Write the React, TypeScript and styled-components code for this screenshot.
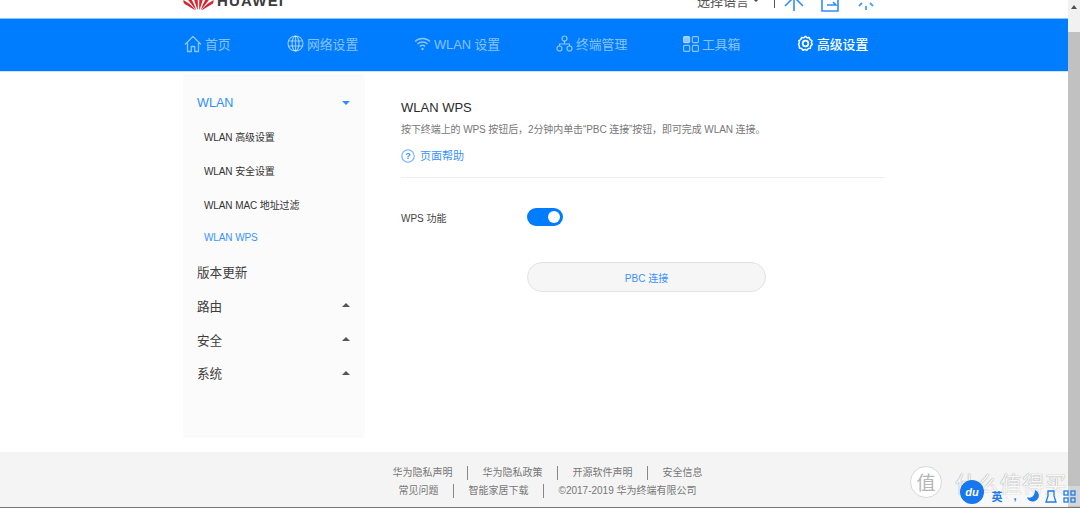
import React from 'react';
import styled, { createGlobalStyle } from 'styled-components';

const GlobalStyle = createGlobalStyle`
  html, body {
    margin: 0;
    padding: 0;
    height: 100%;
    overflow: hidden;
    background: #fff;
    font-family: "Liberation Sans", "Noto Sans CJK SC", sans-serif;
  }
`;

const Screen = styled.div`
  position: relative;
  width: 1080px;
  height: 508px;
  display: flex;
  overflow: hidden;
  border-bottom: 1px solid #777;
  box-sizing: border-box;
`;

const Page = styled.div`
  width: 1068px;
  display: flex;
  flex-direction: column;
`;

const TopBar = styled.header`
  height: 18px;
  flex: none;
  overflow: hidden;
  display: flex;
  align-items: flex-end;
  padding: 0 192px 0 183px;
  justify-content: space-between;
`;

const Logo = styled.div`
  display: flex;
  align-items: center;
  gap: 3px;
  height: 24px;
  margin-bottom: 6px;
  color: #3c3c3c;
  font-size: 15px;
  font-weight: 700;
  letter-spacing: 1.2px;
`;

const TopTools = styled.div`
  display: flex;
  align-items: center;
  height: 24px;
  margin-bottom: 6px;
  color: #555;
  font-size: 13px;
`;

const LangCaret = styled.span`
  width: 0;
  height: 0;
  margin: 0 15px 0 4px;
  border: 3px solid transparent;
  border-top: 3px solid #444;
  border-bottom: 0;
`;

const ToolDivider = styled.span`
  width: 1px;
  height: 16px;
  background: #555;
  margin-right: 9px;
`;

const ToolIcon = styled.svg`
  width: 20px;
  height: 24px;
  margin-right: 16px;
  &:last-child { margin-right: 0; }
`;

const Nav = styled.nav`
  height: 54px;
  flex: none;
  box-sizing: border-box;
  background: #007dff;
  border-top: 1px solid #8cc4ff;
  border-bottom: 1px solid #cfe5ff;
  display: flex;
  align-items: center;
  padding: 0 0 3px 184px;
`;

const NavItem = styled.div<{ $active?: boolean; $width: number }>`
  width: ${(p) => p.$width}px;
  flex: none;
  display: flex;
  align-items: center;
  gap: 3px;
  color: ${(p) => (p.$active ? '#fff' : 'rgba(255,255,255,0.55)')};
  font-size: 12.8px;
  font-weight: ${(p) => (p.$active ? 500 : 400)};
  white-space: nowrap;
  svg { flex: none; }
`;

const Body = styled.main`
  flex: 1;
  display: flex;
  padding: 2px 0 14px 183px;
  min-height: 0;
`;

const Sidebar = styled.aside`
  width: 182px;
  flex: none;
  box-sizing: border-box;
  background: #fbfbfb;
  padding-top: 12px;
`;

const MenuRow = styled.div<{ $active?: boolean }>`
  height: 33.75px;
  display: flex;
  align-items: center;
  justify-content: space-between;
  padding: 0 15px 0 14px;
  color: ${(p) => (p.$active ? '#2f8dff' : '#3d3d3d')};
  font-size: 12.6px;
`;

const SubRow = styled.div<{ $active?: boolean }>`
  height: 33.75px;
  display: flex;
  align-items: center;
  padding-left: 21px;
  color: ${(p) => (p.$active ? '#3a92ff' : '#333')};
  font-size: 10px;
  letter-spacing: -0.1px;
`;

const Caret = styled.span<{ $open?: boolean }>`
  width: 0;
  height: 0;
  border-left: 4.5px solid transparent;
  border-right: 4.5px solid transparent;
  ${(p) => (p.$open ? 'border-top: 4.5px solid #2f8dff;' : 'border-bottom: 4.5px solid #555;')}
`;

const Content = styled.section`
  width: 484px;
  flex: none;
  margin-left: 36px;
  padding-top: 24px;
`;

const Title = styled.h1`
  margin: 0;
  font-size: 13px;
  line-height: 20px;
  font-weight: 400;
  color: #2a2a2a;
`;

const Hint = styled.p`
  margin: 5px 0 0;
  font-size: 10px;
  letter-spacing: -0.09px;
  line-height: 14px;
  color: #777;
  white-space: nowrap;
`;

const HelpLink = styled.div`
  display: flex;
  align-items: center;
  gap: 5px;
  margin-top: 12px;
  padding-bottom: 14px;
  border-bottom: 1px solid #eee;
  color: #3a92ff;
  font-size: 11px;
  line-height: 14px;
`;

const FieldRow = styled.div`
  display: flex;
  align-items: center;
  margin-top: 29px;
  height: 20px;
`;

const FieldLabel = styled.label`
  width: 126px;
  flex: none;
  font-size: 10px;
  color: #444;
`;

const Toggle = styled.span`
  width: 36px;
  height: 18px;
  box-sizing: border-box;
  padding: 2px;
  border-radius: 9px;
  background: #007dff;
  display: flex;
  justify-content: flex-end;
  &::after {
    content: '';
    width: 12px;
    height: 12px;
    margin: 1px 1px 0 0;
    border-radius: 50%;
    background: #fff;
  }
`;

const PbcButton = styled.button`
  display: block;
  width: 239px;
  height: 30px;
  margin: 35px 0 0 126px;
  padding: 0;
  background: #f6f6f6;
  border: 1px solid #e2e2e2;
  border-radius: 16px;
  color: #3a92ff;
  font-family: inherit;
  font-size: 10px;
`;

const Footer = styled.footer`
  height: 55px;
  flex: none;
  box-sizing: border-box;
  background: #f4f4f4;
  padding: 12px 0 0 27px;
  display: flex;
  flex-direction: column;
  align-items: center;
`;

const FooterLine = styled.div`
  display: flex;
  align-items: center;
  height: 18px;
  font-size: 10px;
  color: #777;
`;

const FooterLink = styled.span`
  padding: 0 14.5px;
  &:first-child { padding-left: 0; }
  &:last-child { padding-right: 0; }
  & + & { border-left: 1px solid #888; }
  line-height: 14px;
`;

const Scrollbar = styled.div`
  width: 12px;
  flex: none;
  background: #f1f1f1;
  display: flex;
  flex-direction: column;
  align-items: center;
  padding-top: 5px;
  box-sizing: border-box;
  margin-left: auto;
`;

const ScrollArrow = styled.span`
  flex: none;
  width: 0;
  height: 0;
  border-left: 3.5px solid transparent;
  border-right: 3.5px solid transparent;
  border-bottom: 4px solid #505050;
`;

const ScrollThumb = styled.div`
  width: 100%;
  flex: 1;
  margin-top: 23px;
  background: #c1c1c1;
`;

const Watermark = styled.div`
  position: absolute;
  right: 13px;
  bottom: 9px;
  display: flex;
  align-items: center;
  gap: 13px;
  color: rgba(255, 255, 255, 0.95);
  font-size: 22px;
  line-height: 32px;
  letter-spacing: 0.4px;
  font-family: "Noto Sans CJK SC", sans-serif;
  text-shadow: 0 0 1px rgba(0, 0, 0, 0.55);
  white-space: nowrap;
`;

const WatermarkBadge = styled.span`
  width: 32px;
  height: 32px;
  box-sizing: border-box;
  border-radius: 50%;
  background: #fff;
  border: 1px solid #d8d8d8;
  display: flex;
  align-items: center;
  justify-content: center;
  color: #b5b5b5;
  font-size: 19px;
  letter-spacing: 0;
  text-shadow: none;
`;

const ImeBar = styled.div`
  position: absolute;
  right: 0;
  bottom: 1px;
  width: 120px;
  height: 20px;
  display: flex;
  align-items: center;
  padding-left: 28px;
  box-sizing: border-box;
  background: rgba(255, 255, 255, 0.35);
  color: #1f7be8;
  font-size: 11px;
  font-weight: 700;
`;

const ImeItem = styled.span`
  width: 18px;
  flex: none;
  display: flex;
  justify-content: center;
`;

const ImeBadge = styled.span`
  position: absolute;
  left: 0;
  bottom: 2px;
  width: 24px;
  height: 24px;
  border-radius: 50%;
  background: #1677ee;
  color: #fff;
  font-size: 11px;
  font-weight: 700;
  font-style: italic;
  display: flex;
  align-items: center;
  justify-content: center;
`;

const HomeIcon = () => (
  <svg width="18" height="18" viewBox="0 0 18 18" fill="none" stroke="currentColor" strokeWidth="1.3">
    <path d="M1 9.500 9 1.500l8 8M3.500 8v8.500h3.800v-5h3.400v5h3.800V8" strokeLinejoin="round" />
  </svg>
);

const GlobeIcon = () => (
  <svg width="17" height="17" viewBox="0 0 17 17" fill="none" stroke="currentColor" strokeWidth="1.2">
    <circle cx="8.500" cy="8.500" r="7.500" />
    <ellipse cx="8.500" cy="8.500" rx="3.400" ry="7.500" />
    <path d="M1.500 6h14M1.500 11h14M8.500 1v15" />
  </svg>
);

const WifiIcon = () => (
  <svg width="17" height="17" viewBox="0 0 17 17" fill="none" stroke="currentColor" strokeWidth="1.3">
    <path d="M1 6.500c4-4 11-4 15 0M3.400 9c2.800-2.700 7.400-2.700 10.200 0M5.800 11.400c1.500-1.300 3.900-1.300 5.400 0" />
    <circle cx="8.500" cy="14" r="1.200" fill="currentColor" stroke="none" />
  </svg>
);

const TreeIcon = () => (
  <svg width="17" height="17" viewBox="0 0 17 17" fill="none" stroke="currentColor" strokeWidth="1.200">
    <circle cx="8.500" cy="3.500" r="2.500" />
    <circle cx="3.500" cy="13.500" r="2.500" />
    <circle cx="13.500" cy="13.500" r="2.500" />
    <path d="M8.500 6v3M3.500 11V9h10v2" />
  </svg>
);

const ToolsIcon = () => (
  <svg width="16" height="16" viewBox="0 0 16 16" fill="none" stroke="currentColor" strokeWidth="1.2">
    <rect x="0.600" y="0.600" width="6" height="6" rx="1" fill="currentColor" />
    <rect x="9.400" y="0.600" width="6" height="6" rx="1" />
    <rect x="0.600" y="9.400" width="6" height="6" rx="1" />
    <rect x="9.400" y="9.400" width="6" height="6" rx="1" />
  </svg>
);

const GearIcon = () => (
  <svg width="17" height="17" viewBox="0 0 17 17" fill="none" stroke="currentColor">
    <path d="M8.500 1.200 10 2.800l2.200-.3.800 2.100 2 1-.6 2.100.9 1.800-1.700 1.500-.2 2.200-2.200.4-1.300 1.800-1.900-1-2 .9-1.300-1.800-2.200-.4-.2-2.200L1.500 9.500l.9-1.900-.6-2 2-1 .8-2.100 2.200.3z" strokeWidth="1.500" strokeLinejoin="round" />
    <circle cx="8.500" cy="8.500" r="2.800" strokeWidth="1.800" />
  </svg>
);

const HelpIcon = () => (
  <svg width="14" height="14" viewBox="0 0 14 14">
    <circle cx="7" cy="7" r="6.200" fill="none" stroke="#6aaeff" strokeWidth="1.100" />
    <text x="7" y="10" textAnchor="middle" fontSize="9" fontWeight="700" fill="#3a92ff" fontFamily="Liberation Sans">?</text>
  </svg>
);

const HuaweiMark = () => (
  <svg width="31" height="24" viewBox="0 0 33 24" fill="#d9232e">
    <path d="M15.500 23 11 9c-.4-2 .5-4 2.500-5.500 2 3 2.800 12 2 19.500zM17.500 23 22 9c.4-2-.5-4-2.500-5.500-2 3-2.800 12-2 19.500z" />
    <path d="M14 23 5.500 12c-1-1.800-.6-3.600.5-5 2.500 3 6.500 10 8 16zM19 23l8.500-11c1-1.800.6-3.600-.5-5-2.500 3-6.500 10-8 16z" />
    <path d="M13 23 1.500 16c-1-1-1.200-2.500-1-4 3 2 10 6 12.500 11zM20 23l11.500-7c1-1 1.200-2.500 1-4-3 2-10 6-12.500 11z" />
  </svg>
);

const navItems = [
  { label: '首页', width: 103, icon: <HomeIcon /> },
  { label: '网络设置', width: 127, icon: <GlobeIcon /> },
  { label: 'WLAN 设置', width: 142, icon: <WifiIcon /> },
  { label: '终端管理', width: 127, icon: <TreeIcon /> },
  { label: '工具箱', width: 114, icon: <ToolsIcon /> },
  { label: '高级设置', width: 100, icon: <GearIcon />, active: true },
];

const App = () => (
  <Screen>
    <GlobalStyle />
    <Page>
      <TopBar>
        <Logo>
          <HuaweiMark />
          <span>HUAWEI</span>
        </Logo>
        <TopTools>
          <span>选择语言</span>
          <LangCaret />
          <ToolDivider />
          <ToolIcon viewBox="0 0 20 24" fill="none" stroke="#2f8dff" strokeWidth="1.600">
            <path d="M10 12v11M1 18l9-9 9 9" />
          </ToolIcon>
          <ToolIcon viewBox="0 0 20 24" fill="none" stroke="#2f8dff" strokeWidth="1.600">
            <path d="M2 6h16v17H2zM7 17h9l-3-3" />
          </ToolIcon>
          <ToolIcon viewBox="0 0 20 24" fill="none" stroke="#4aa0ff" strokeWidth="1.800">
            <path d="M10 18v4M6 15l-3 3M14 15l3 3M4 11H0M20 11h-4" />
          </ToolIcon>
        </TopTools>
      </TopBar>
      <Nav>
        {navItems.map((item) => (
          <NavItem key={item.label} $active={item.active} $width={item.width}>
            {item.icon}
            <span>{item.label}</span>
          </NavItem>
        ))}
      </Nav>
      <Body>
        <Sidebar>
          <MenuRow $active>
            WLAN
            <Caret $open />
          </MenuRow>
          <SubRow>WLAN 高级设置</SubRow>
          <SubRow>WLAN 安全设置</SubRow>
          <SubRow>WLAN MAC 地址过滤</SubRow>
          <SubRow $active>WLAN WPS</SubRow>
          <MenuRow>版本更新</MenuRow>
          <MenuRow>
            路由
            <Caret />
          </MenuRow>
          <MenuRow>
            安全
            <Caret />
          </MenuRow>
          <MenuRow>
            系统
            <Caret />
          </MenuRow>
        </Sidebar>
        <Content>
          <Title>WLAN WPS</Title>
          <Hint>按下终端上的 WPS 按钮后，2分钟内单击“PBC 连接”按钮，即可完成 WLAN 连接。</Hint>
          <HelpLink>
            <HelpIcon />
            页面帮助
          </HelpLink>
          <FieldRow>
            <FieldLabel>WPS 功能</FieldLabel>
            <Toggle />
          </FieldRow>
          <PbcButton type="button">PBC 连接</PbcButton>
        </Content>
      </Body>
      <Footer>
        <FooterLine>
          <FooterLink>华为隐私声明</FooterLink>
          <FooterLink>华为隐私政策</FooterLink>
          <FooterLink>开源软件声明</FooterLink>
          <FooterLink>安全信息</FooterLink>
        </FooterLine>
        <FooterLine>
          <FooterLink>常见问题</FooterLink>
          <FooterLink>智能家居下载</FooterLink>
          <FooterLink>©2017-2019 华为终端有限公司</FooterLink>
        </FooterLine>
      </Footer>
    </Page>
    <Scrollbar>
      <ScrollArrow />
      <ScrollThumb />
    </Scrollbar>
    <Watermark>
      <WatermarkBadge>值</WatermarkBadge>
      什么值得买
    </Watermark>
    <ImeBar>
      <ImeBadge>du</ImeBadge>
      <ImeItem>英</ImeItem>
      <ImeItem>,</ImeItem>
      <ImeItem>
        <svg width="12" height="12" viewBox="0 0 12 12" fill="#1f7be8"><path d="M8 0a6 6 0 1 1-8 7c3 2 8 0 8-7z" /></svg>
      </ImeItem>
      <ImeItem>
        <svg width="12" height="13" viewBox="0 0 12 13" fill="none" stroke="#1f7be8" strokeWidth="1.300"><path d="M3 1h6v5l2 6H1l2-6z" /></svg>
      </ImeItem>
      <ImeItem>
        <svg width="13" height="13" viewBox="0 0 13 13" fill="none" stroke="#1f7be8" strokeWidth="1.300">
          <rect x="1" y="1" width="4" height="4" />
          <rect x="8" y="1" width="4" height="4" />
          <rect x="1" y="8" width="4" height="4" />
          <rect x="8" y="8" width="4" height="4" />
        </svg>
      </ImeItem>
    </ImeBar>
  </Screen>
);

export default App;
